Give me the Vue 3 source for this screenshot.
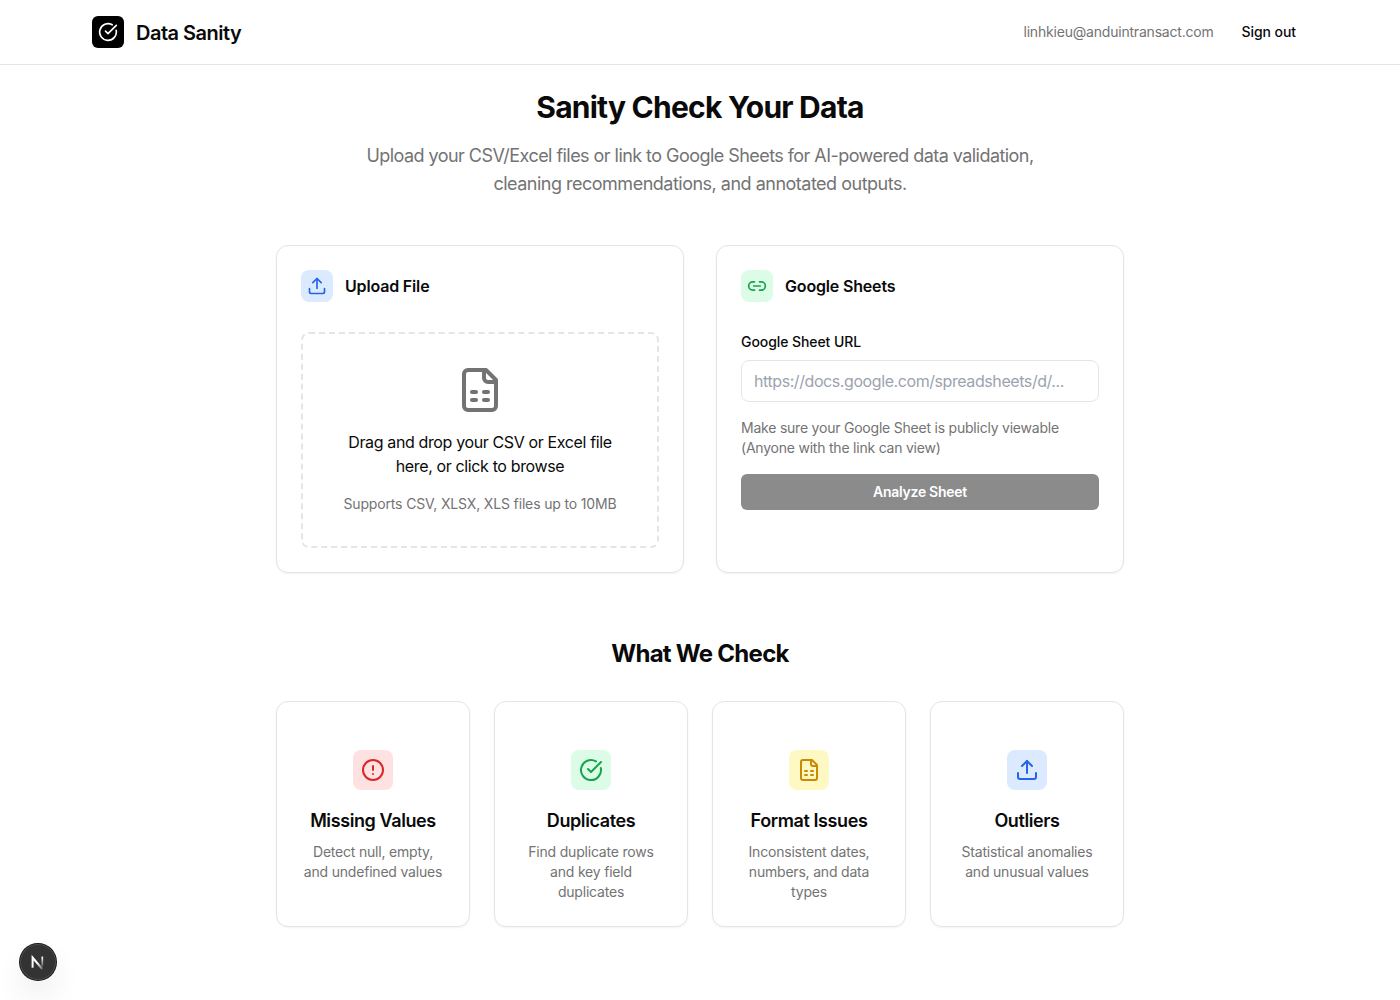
<script setup>
import { h } from 'vue'

const icons = {
  check: ['M21.801 10A10 10 0 1 1 17 3.335', 'm9 11 3 3L22 4'],
  upload: ['M12 3v12', 'm17 8-5-5-5 5', 'M21 15v4a2 2 0 0 1-2 2H5a2 2 0 0 1-2-2v-4'],
  link: ['M9 17H7A5 5 0 0 1 7 7h2', 'M15 7h2a5 5 0 1 1 0 10h-2', 'M8 12h8'],
  sheet: [
    'M15 2H6a2 2 0 0 0-2 2v16a2 2 0 0 0 2 2h12a2 2 0 0 0 2-2V7Z',
    'M14 2v4a2 2 0 0 0 2 2h4',
    'M8 13h2', 'M14 13h2', 'M8 17h2', 'M14 17h2',
  ],
  alert: ['M22 12a10 10 0 1 1-20 0a10 10 0 1 1 20 0Z', 'M12 8v4', 'M12 16h.01'],
}

const Icon = (props) =>
  h(
    'svg',
    {
      width: props.size,
      height: props.size,
      viewBox: '0 0 24 24',
      fill: 'none',
      stroke: 'currentColor',
      'stroke-width': 2,
      'stroke-linecap': 'round',
      'stroke-linejoin': 'round',
    },
    icons[props.name].map((d) => h('path', { d })),
  )
Icon.props = ['name', 'size']

const checks = [
  { title: 'Missing Values', text: 'Detect null, empty, and undefined values', icon: 'alert', tone: 'red' },
  { title: 'Duplicates', text: 'Find duplicate rows and key field duplicates', icon: 'check', tone: 'green' },
  { title: 'Format Issues', text: 'Inconsistent dates, numbers, and data types', icon: 'sheet', tone: 'yellow' },
  { title: 'Outliers', text: 'Statistical anomalies and unusual values', icon: 'upload', tone: 'blue' },
]
</script>

<template>
  <div class="page">
    <header class="topbar">
      <div class="topbar-inner">
        <div class="brand">
          <span class="logo"><Icon name="check" :size="20" /></span>
          <span class="brand-name">Data Sanity</span>
        </div>
        <div class="account">
          <span class="email">linhkieu@anduintransact.com</span>
          <button class="signout">Sign out</button>
        </div>
      </div>
    </header>

    <main>
      <h1>Sanity Check Your Data</h1>
      <p class="lead">
        Upload your CSV/Excel files or link to Google Sheets for AI-powered data validation,<br />
        <span class="lead-end">cleaning recommendations, and annotated outputs.</span>
      </p>

      <div class="sources">
        <section class="card">
          <div class="card-head">
            <span class="tile blue"><Icon name="upload" :size="20" /></span>
            <h3>Upload File</h3>
          </div>
          <div class="dropzone">
            <Icon name="sheet" :size="48" />
            <p class="drop-text">Drag and drop your CSV or Excel file<br />here, or click to browse</p>
            <p class="drop-hint">Supports CSV, XLSX, XLS files up to 10MB</p>
          </div>
        </section>

        <section class="card">
          <div class="card-head">
            <span class="tile green"><Icon name="link" :size="20" /></span>
            <h3>Google Sheets</h3>
          </div>
          <label for="sheet-url">Google Sheet URL</label>
          <input id="sheet-url" type="url" placeholder="https://docs.google.com/spreadsheets/d/..." />
          <p class="help">Make sure your Google Sheet is publicly viewable<br />(Anyone with the link can view)</p>
          <button class="analyze" disabled>Analyze Sheet</button>
        </section>
      </div>

      <h2>What We Check</h2>
      <div class="checks">
        <section v-for="c in checks" :key="c.title" class="card check">
          <span class="tile large" :class="c.tone"><Icon :name="c.icon" :size="24" /></span>
          <h4>{{ c.title }}</h4>
          <p>{{ c.text }}</p>
        </section>
      </div>
    </main>

    <div class="dev-badge">
      <svg width="40" height="40" viewBox="0 0 40 40" fill="none">
        <defs>
          <linearGradient id="stem" x1="0" y1="15" x2="0" y2="25.5" gradientUnits="userSpaceOnUse">
            <stop stop-color="#fff" />
            <stop offset="1" stop-color="#fff" stop-opacity="0.1" />
          </linearGradient>
          <linearGradient id="slant" x1="20" y1="20" x2="25.5" y2="27" gradientUnits="userSpaceOnUse">
            <stop stop-color="#fff" />
            <stop offset="1" stop-color="#fff" stop-opacity="0.25" />
          </linearGradient>
        </defs>
        <path d="M14.6 25.8V15.6L24.2 27" stroke="url(#slant)" stroke-width="2" />
        <path d="M24.3 14.6v9.8" stroke="url(#stem)" stroke-width="1.7" />
      </svg>
    </div>
  </div>
</template>

<style>
body {
  background: #fff;
}
</style>

<style scoped>
* {
  box-sizing: border-box;
  margin: 0;
}
.page {
  position: relative;
  height: 1000px;
  overflow: hidden;
  color: #0a0a0a;
  font-family: Inter, 'Liberation Sans', sans-serif;
  font-size: 16px;
  line-height: 24px;
}
svg {
  display: block;
}
button,
input {
  font-family: inherit;
}
.topbar {
  height: 65px;
  border-bottom: 1px solid #e5e5e5;
}
.topbar-inner {
  display: flex;
  align-items: center;
  justify-content: space-between;
  max-width: 1280px;
  height: 64px;
  margin: 0 auto;
  padding: 0 32px;
}
.brand,
.account,
.card-head {
  display: flex;
  align-items: center;
}
.brand,
.card-head {
  gap: 12px;
}
.account {
  gap: 16px;
}
.logo {
  display: flex;
  align-items: center;
  justify-content: center;
  width: 32px;
  height: 32px;
  border-radius: 6px;
  background: #000;
  color: #fff;
}
.brand-name {
  padding-top: 2px;
  font-size: 20px;
  line-height: 28px;
  font-weight: 600;
  letter-spacing: -0.5px;
}
.email {
  font-size: 14px;
  line-height: 20px;
  letter-spacing: -0.2px;
  color: #737373;
}
.signout {
  padding: 0 12px;
  border: 0;
  background: none;
  color: #0a0a0a;
  font-size: 14px;
  line-height: 20px;
  font-weight: 500;
  letter-spacing: -0.08px;
}
main {
  max-width: 848px;
  margin: 0 auto;
  padding-top: 24px;
}
h1 {
  font-size: 30px;
  line-height: 36px;
  font-weight: 700;
  letter-spacing: -0.77px;
  text-align: center;
}
.lead {
  margin: 17px 0 47px;
  font-size: 18px;
  line-height: 28px;
  letter-spacing: -0.55px;
  color: #737373;
  text-align: center;
  white-space: nowrap;
}
.lead-end {
  letter-spacing: -0.5px;
}
.sources {
  display: grid;
  grid-template-columns: 1fr 1fr;
  gap: 32px;
}
.card {
  padding: 24px;
  border: 1px solid #e5e5e5;
  border-radius: 12px;
  background: #fff;
  box-shadow: 0 1px 2px rgba(0, 0, 0, 0.05);
}
.card-head {
  margin-bottom: 30px;
}
h3 {
  font-size: 16px;
  line-height: 24px;
  font-weight: 600;
  letter-spacing: -0.17px;
}
.tile {
  display: flex;
  align-items: center;
  justify-content: center;
  width: 32px;
  height: 32px;
  border-radius: 8px;
}
.tile.large {
  width: 40px;
  height: 40px;
}
.blue {
  background: #dbeafe;
  color: #2563eb;
}
.green {
  background: #dcfce7;
  color: #16a34a;
}
.red {
  background: #fee2e2;
  color: #dc2626;
}
.yellow {
  background: #fef9c3;
  color: #ca8a04;
}
.dropzone {
  display: flex;
  flex-direction: column;
  align-items: center;
  gap: 16px;
  padding: 32px 0;
  border: 2px dashed #e5e5e5;
  border-radius: 8px;
  color: #737373;
  text-align: center;
  white-space: nowrap;
}
.drop-text {
  letter-spacing: -0.37px;
  color: #0a0a0a;
}
.drop-hint {
  font-size: 14px;
  line-height: 20px;
  letter-spacing: -0.15px;
}
label {
  display: block;
  font-size: 14px;
  line-height: 20px;
  font-weight: 500;
  letter-spacing: -0.08px;
}
input {
  display: block;
  width: 100%;
  height: 42px;
  margin-top: 8px;
  padding: 8px 12px;
  border: 1px solid #e5e5e5;
  border-radius: 8px;
  background: #fff;
  font-size: 16px;
  letter-spacing: -0.42px;
}
input::placeholder {
  color: #9ca3af;
}
.help {
  margin: 16px 0;
  font-size: 14px;
  line-height: 20px;
  letter-spacing: -0.22px;
  color: #737373;
  white-space: nowrap;
}
.analyze {
  display: block;
  width: 100%;
  height: 36px;
  padding: 0;
  border: 0;
  border-radius: 6px;
  background: #8b8b8b;
  color: #fff;
  font-size: 14px;
  line-height: 20px;
  font-weight: 600;
  letter-spacing: -0.28px;
}
h2 {
  margin: 65px 0 31px;
  font-size: 24px;
  line-height: 32px;
  font-weight: 700;
  letter-spacing: -0.73px;
  text-align: center;
}
.checks {
  display: grid;
  grid-template-columns: repeat(4, 1fr);
  gap: 24px;
}
.check {
  display: flex;
  flex-direction: column;
  align-items: center;
  padding-top: 48px;
  text-align: center;
}
h4 {
  margin: 17px 0 7px;
  font-size: 18px;
  line-height: 28px;
  font-weight: 600;
  letter-spacing: -0.4px;
  white-space: nowrap;
}
.check p {
  font-size: 14px;
  line-height: 20px;
  letter-spacing: -0.2px;
  color: #737373;
}
.dev-badge {
  position: absolute;
  left: 20px;
  bottom: 20px;
  display: flex;
  align-items: center;
  justify-content: center;
  width: 36px;
  height: 36px;
  border-radius: 50%;
  background: #333;
  box-shadow: 0 0 0 1px #171717, inset 0 0 0 1px #4a4a4a, 0 16px 32px -8px rgba(0, 0, 0, 0.24);
}
.dev-badge svg {
  flex: none;
}
</style>
